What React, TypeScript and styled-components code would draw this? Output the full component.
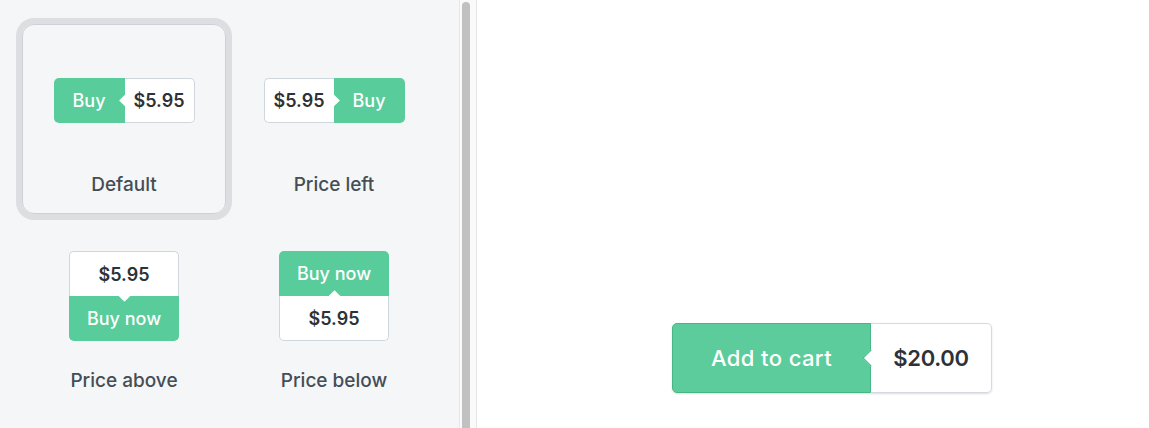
import React from "react";
import styled, { createGlobalStyle, css } from "styled-components";

const GlobalStyle = createGlobalStyle`
  html, body {
    margin: 0;
    padding: 0;
    height: 100%;
    background: #ffffff;
  }
  body {
    font-family: "Inter", "Noto Sans", "Liberation Sans", sans-serif;
    -webkit-font-smoothing: antialiased;
  }
  #root {
    height: 100%;
  }
`;

const GREEN = "#58cc9a";
const GREEN_DARK = "#46b684";
const PRICE_BORDER = "#cfd6dd";

type Layout = "default" | "left" | "above" | "below";

const Page = styled.div`
  display: flex;
  height: 100vh;
  overflow: hidden;
`;

const Sidebar = styled.aside`
  box-sizing: border-box;
  display: flex;
  width: 477px;
  flex: 0 0 477px;
  height: 100%;
  overflow: hidden;
  background: #f5f6f8;
  border-right: 1px solid #e6e6e6;
`;

const SidebarContent = styled.div`
  flex: 1;
  min-width: 0;
`;

/* drawn scrollbar, the page's own one is hidden in the capture */
const ScrollTrack = styled.div`
  flex: 0 0 auto;
  width: 11px;
  padding: 2px 3px 0 2px;
  background: #fafafa;
  border-left: 1px solid #e8e8e8;
`;

const ScrollThumb = styled.div`
  width: 8px;
  height: 440px;
  border-radius: 4px;
  background: #c1c1c1;
`;

const StyleGrid = styled.div`
  display: grid;
  grid-template-columns: repeat(2, 204px);
  grid-auto-rows: 190px;
  gap: 6px;
  padding: 24px 0 30px 22px;
`;

const StyleCard = styled.div<{ $selected?: boolean }>`
  box-sizing: border-box;
  display: flex;
  flex-direction: column;
  align-items: center;
  padding-top: 10px;
  border-radius: 12px;
  border: 1px solid transparent;
  cursor: pointer;

  ${(p) =>
    p.$selected &&
    css`
      border-color: #cdd0d5;
      box-shadow: 0 0 0 6px #dcdee1;
    `}
`;

const Preview = styled.div`
  height: 130px;
  width: 100%;
  display: flex;
  align-items: center;
  justify-content: center;
`;

const StyleLabel = styled.div`
  margin-top: 8px;
  font-size: 19px;
  line-height: 24px;
  font-weight: 500;
  color: #444e54;
`;

const ButtonGroup = styled.div<{ $layout: Layout }>`
  display: inline-flex;
  flex-direction: ${(p) =>
    p.$layout === "above" || p.$layout === "below" ? "column" : "row"};
`;

const ActionPart = styled.div<{ $layout: Layout }>`
  display: flex;
  align-items: center;
  justify-content: center;
  height: 45px;
  width: ${(p) => (p.$layout === "above" || p.$layout === "below" ? "110px" : "71px")};
  background: ${GREEN};
  color: #ffffff;
  font-size: 18px;
  font-weight: 500;
  ${(p) => p.$layout === "default" && "border-radius: 5px 0 0 5px;"}
  ${(p) => p.$layout === "left" && "border-radius: 0 5px 5px 0;"}
  ${(p) => p.$layout === "above" && "border-radius: 0 0 5px 5px;"}
  ${(p) => p.$layout === "below" && "border-radius: 5px 5px 0 0;"}
`;

const notchPlacement = {
  default: "left: -4px; top: 50%; margin-top: -4.5px;",
  left: "right: -4px; top: 50%; margin-top: -4.5px;",
  above: "bottom: -4px; left: 50%; margin-left: -4.5px;",
  below: "top: -4px; left: 50%; margin-left: -4.5px;",
};

const PricePart = styled.div<{ $layout: Layout }>`
  position: relative;
  z-index: 1;
  box-sizing: border-box;
  display: flex;
  align-items: center;
  justify-content: center;
  height: 45px;
  width: ${(p) => (p.$layout === "above" || p.$layout === "below" ? "110px" : "70px")};
  background: #ffffff;
  border: 1px solid ${PRICE_BORDER};
  color: #2c3237;
  font-size: 18px;
  font-weight: 600;
  ${(p) => p.$layout === "default" && "border-left: 0; border-radius: 0 5px 5px 0;"}
  ${(p) => p.$layout === "left" && "border-right: 0; border-radius: 5px 0 0 5px;"}
  ${(p) => p.$layout === "above" && "border-bottom: 0; border-radius: 5px 5px 0 0;"}
  ${(p) => p.$layout === "below" && "border-top: 0; border-radius: 0 0 5px 5px;"}

  /* little arrow pointing into the green part */
  &::before {
    content: "";
    position: absolute;
    width: 9px;
    height: 9px;
    background: #ffffff;
    transform: rotate(45deg);
    ${(p) => notchPlacement[p.$layout]}
  }
`;

const PreviewArea = styled.main`
  flex: 1;
  background: #ffffff;
  padding: 323px 0 0 195px;
`;

const CartButton = styled.div`
  display: inline-flex;
  height: 70px;
  border-radius: 5px;
  box-shadow: 0 1px 2px rgba(0, 0, 0, 0.14);
`;

const CartAction = styled.div`
  box-sizing: border-box;
  display: flex;
  align-items: center;
  justify-content: center;
  width: 199px;
  background: #5ccc9c;
  border: 1px solid ${GREEN_DARK};
  border-radius: 5px 0 0 5px;
  color: #ffffff;
  font-size: 22px;
  font-weight: 500;
  letter-spacing: 0.4px;
`;

const CartPrice = styled.div`
  position: relative;
  box-sizing: border-box;
  display: flex;
  align-items: center;
  justify-content: center;
  width: 121px;
  background: #ffffff;
  border: 1px solid #d6d9dd;
  border-left: 0;
  border-radius: 0 5px 5px 0;
  color: #2c3237;
  font-size: 22px;
  font-weight: 600;
  letter-spacing: -0.3px;

  &::before {
    content: "";
    position: absolute;
    left: -6px;
    top: 50%;
    margin-top: -6px;
    width: 11px;
    height: 11px;
    background: #ffffff;
    border-left: 1px solid ${GREEN_DARK};
    border-bottom: 1px solid ${GREEN_DARK};
    transform: rotate(45deg);
  }
`;

interface StyleOption {
  layout: Layout;
  label: string;
  action: string;
}

const options: StyleOption[] = [
  { layout: "default", label: "Default", action: "Buy" },
  { layout: "left", label: "Price left", action: "Buy" },
  { layout: "above", label: "Price above", action: "Buy now" },
  { layout: "below", label: "Price below", action: "Buy now" },
];

const PriceButton: React.FC<{ layout: Layout; action: string; price: string }> = ({
  layout,
  action,
  price,
}) => {
  const priceFirst = layout === "left" || layout === "above";
  return (
    <ButtonGroup $layout={layout}>
      {priceFirst && <PricePart $layout={layout}>{price}</PricePart>}
      <ActionPart $layout={layout}>{action}</ActionPart>
      {!priceFirst && <PricePart $layout={layout}>{price}</PricePart>}
    </ButtonGroup>
  );
};

export default function App() {
  const selected: Layout = "default";

  return (
    <>
      <GlobalStyle />
      <Page>
        <Sidebar>
          <SidebarContent>
            <StyleGrid>
              {options.map((opt) => (
                <StyleCard key={opt.layout} $selected={opt.layout === selected}>
                  <Preview>
                    <PriceButton layout={opt.layout} action={opt.action} price="$5.95" />
                  </Preview>
                  <StyleLabel>{opt.label}</StyleLabel>
                </StyleCard>
              ))}
            </StyleGrid>
          </SidebarContent>
          <ScrollTrack>
            <ScrollThumb />
          </ScrollTrack>
        </Sidebar>
        <PreviewArea>
          <CartButton>
            <CartAction>Add to cart</CartAction>
            <CartPrice>$20.00</CartPrice>
          </CartButton>
        </PreviewArea>
      </Page>
    </>
  );
}
